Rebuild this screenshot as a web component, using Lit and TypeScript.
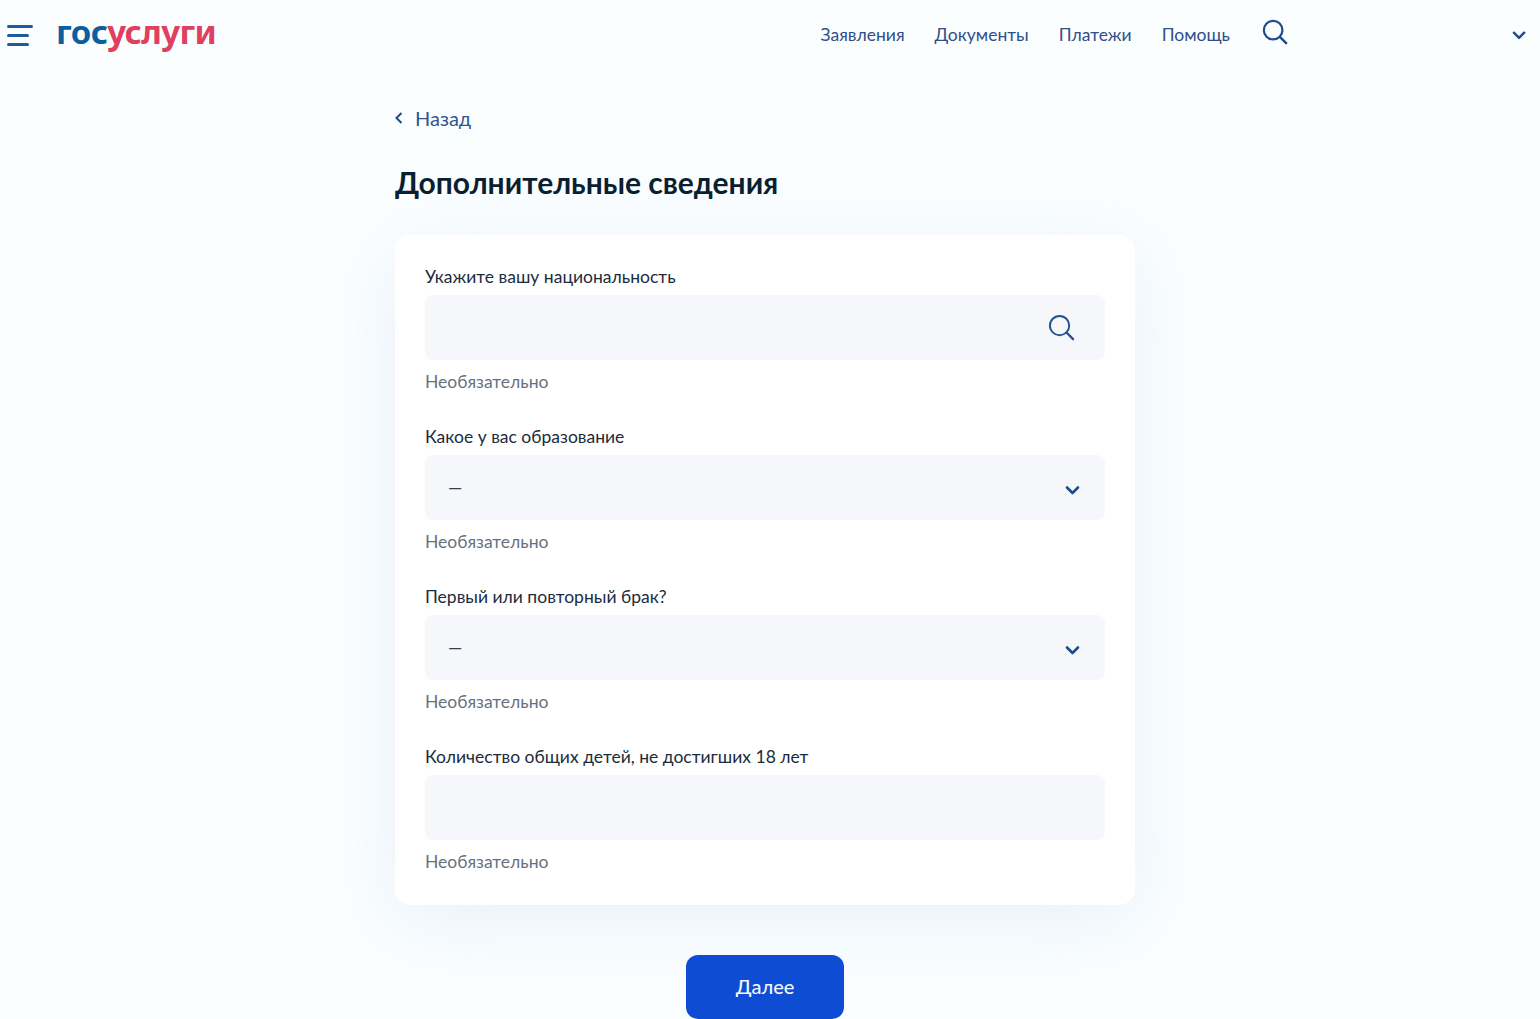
import { LitElement, html, css, svg } from 'lit';
import { customElement } from 'lit/decorators.js';

interface Field {
  label: string
  kind: 'search' | 'select' | 'text'
}

const fields: Field[] = [
  { label: 'Укажите вашу национальность', kind: 'search' },
  { label: 'Какое у вас образование', kind: 'select' },
  { label: 'Первый или повторный брак?', kind: 'select' },
  { label: 'Количество общих детей, не достигших 18 лет', kind: 'text' },
];

const navItems = ['Заявления', 'Документы', 'Платежи', 'Помощь'];

const chevron = svg`<path d="M2 2.5 L7.5 8 L13 2.5" fill="none" stroke="currentColor" stroke-width="2.6" stroke-linecap="round" stroke-linejoin="round"/>`;

@customElement('app-root')
export class AppRoot extends LitElement {
  static styles = css`
    :host {
      display: block;
      height: 1019px;
      overflow: hidden;
      background: #fbfeff;
      font-family: Lato, "Noto Sans", "Open Sans", sans-serif;
      color: #0b1f33;
    }
    .header {
      display: flex;
      align-items: center;
      height: 70px;
      padding: 0 13px 0 7px;
    }
    .burger {
      display: flex;
      flex-direction: column;
      gap: 6px;
      width: 26px;
      margin-right: 23px;
    }
    .burger span {
      display: block;
      height: 3px;
      border-radius: 2px;
      background: #1d5a9e;
    }
    .burger span:nth-child(2),
    .burger span:nth-child(3) {
      width: 22px;
    }
    .logo {
      font-family: "Noto Sans", sans-serif;
      font-size: 33px;
      font-weight: 700;
      line-height: 36px;
      letter-spacing: -0.6px;
      color: #0d5d9f;
      margin-top: -7px;
    }
    .logo span {
      color: #e0405f;
    }
    .nav {
      display: flex;
      align-items: center;
      gap: 30px;
      margin-left: auto;
      padding-bottom: 2px;
      font-size: 17.5px;
      color: #2f4f8a;
    }
    .nav .search {
      margin: -5px 0 0 2px;
      color: #1d4c8f;
      display: block;
    }
    .account {
      margin-left: 224px;
      color: #1d4c8f;
      display: block;
    }
    .main {
      width: 740px;
      margin: 0 auto;
      transform: translateX(-5px);
    }
    .back {
      display: flex;
      align-items: center;
      gap: 12px;
      margin-top: 35px;
      height: 26px;
      font-size: 20px;
      color: #2f5596;
    }
    .back svg {
      color: #1d4c8f;
    }
    h1 {
      margin: 33px 0 0;
      font-size: 30px;
      line-height: 36px;
      font-weight: 700;
      color: #0b1f33;
    }
    .card {
      margin-top: 35px;
      padding: 31px 30px 32px;
      background: #fff;
      border-radius: 16px;
      box-shadow: 0 16px 80px rgba(220, 232, 246, 0.6);
    }
    .field {
      margin-bottom: 33px;
    }
    .field:last-child {
      margin-bottom: 0;
    }
    label {
      display: block;
      font-size: 17.5px;
      line-height: 22px;
      margin-bottom: 7px;
      color: #1c2c3c;
    }
    .input {
      display: flex;
      align-items: center;
      justify-content: space-between;
      height: 65px;
      padding: 0 24px;
      box-sizing: border-box;
      border-radius: 8px;
      background: #f5f7fb;
      color: #1d4c8f;
    }
    .dash {
      font-size: 18px;
      color: #33404d;
      margin: 0 0 2px -1px;
    }
    .chev {
      margin-left: auto;
      margin-top: 6px;
    }
    .lens {
      margin-left: auto;
      margin-right: 6px;
      color: #24528f;
    }
    .hint {
      margin-top: 11px;
      font-size: 17.5px;
      line-height: 22px;
      color: #66727f;
    }
    .actions {
      display: flex;
      justify-content: center;
      margin-top: 50px;
    }
    .next {
      width: 158px;
      height: 64px;
      padding: 0 0 2px;
      border: 0;
      border-radius: 12px;
      background: #0d4cd3;
      color: #f2f7ff;
      font: 500 20px Lato, "Noto Sans", sans-serif;
    }
  `;

  renderControl(field: Field) {
    if (field.kind === 'search') {
      return html`<svg class="lens" width="27" height="27" viewBox="0 0 28 28">
        <circle cx="12" cy="12" r="10" fill="none" stroke="currentColor" stroke-width="2"/>
        <path d="M19.5 19.5 L26 26" stroke="currentColor" stroke-width="2.4" stroke-linecap="round"/>
      </svg>`;
    }
    if (field.kind === 'select') {
      return html`<span class="dash">—</span>
        <svg class="chev" width="16" height="11" viewBox="0 0 16 11">${chevron}</svg>`;
    }
    return html``;
  }

  render() {
    return html`
      <header class="header">
        <div class="burger"><span></span><span></span><span></span></div>
        <div class="logo">гос<span>услуги</span></div>
        <nav class="nav">
          ${navItems.map(item => html`<span>${item}</span>`)}
          <svg class="search" width="26" height="26" viewBox="0 0 28 28">
            <circle cx="12" cy="12" r="10" fill="none" stroke="currentColor" stroke-width="2.4"/>
            <path d="M19.5 19.5 L26 26" stroke="currentColor" stroke-width="2.6" stroke-linecap="round"/>
          </svg>
        </nav>
        <svg class="account" width="15" height="11" viewBox="0 0 16 11">${chevron}</svg>
      </header>
      <main class="main">
        <div class="back">
          <svg width="8" height="14" viewBox="0 0 8 14">
            <path d="M6.5 2 L1.5 7 L6.5 12" fill="none" stroke="currentColor" stroke-width="2"/>
          </svg>
          <span>Назад</span>
        </div>
        <h1>Дополнительные сведения</h1>
        <section class="card">
          ${fields.map(field => html`
            <div class="field">
              <label>${field.label}</label>
              <div class="input">${this.renderControl(field)}</div>
              <div class="hint">Необязательно</div>
            </div>`)}
        </section>
        <div class="actions"><button class="next">Далее</button></div>
      </main>
    `;
  }
}
